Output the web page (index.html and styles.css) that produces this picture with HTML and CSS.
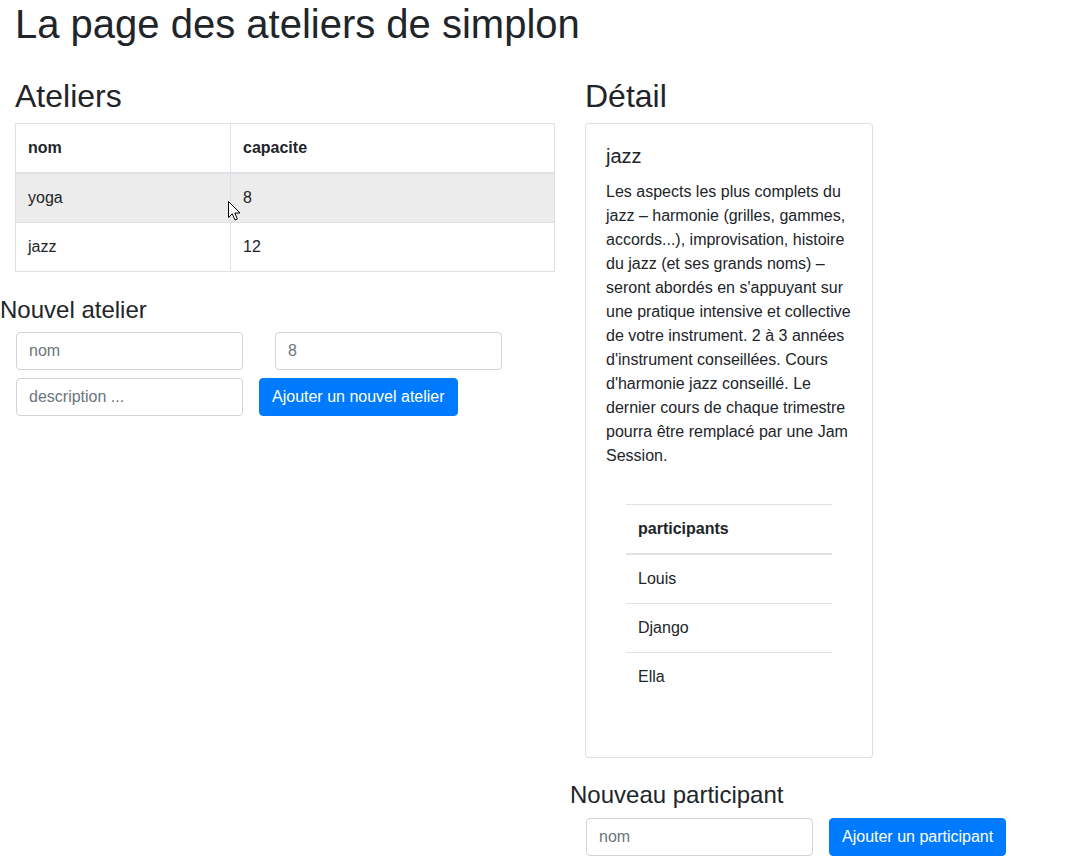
FILE: index.html
```html
<!DOCTYPE html>
<html lang="fr">
<head>
<meta charset="utf-8">
<title>Ateliers simplon</title>
<link rel="stylesheet" href="styles.css">
</head>
<body>
<div class="page">
  <h1 class="title">La page des ateliers de simplon</h1>
  <div class="layout">
    <section class="col col-left">
      <h2 class="section-title">Ateliers</h2>
      <table class="table table-bordered">
        <thead>
          <tr><th class="col-nom">nom</th><th>capacite</th></tr>
        </thead>
        <tbody>
          <tr class="row-hover"><td>yoga</td><td>8</td></tr>
          <tr><td>jazz</td><td>12</td></tr>
        </tbody>
      </table>
      <h4 class="form-title">Nouvel atelier</h4>
      <form class="new-form">
        <div class="form-row">
          <input class="input" type="text" placeholder="nom">
          <input class="input" type="text" placeholder="8">
        </div>
        <div class="form-row">
          <input class="input" type="text" placeholder="description ...">
          <button class="btn" type="button">Ajouter un nouvel atelier</button>
        </div>
      </form>
    </section>
    <section class="col col-right">
      <h2 class="section-title">Détail</h2>
      <div class="card">
        <div class="card-body">
          <h5 class="card-title">jazz</h5>
          <p class="card-text">Les aspects les plus complets du jazz – harmonie (grilles, gammes, accords...), improvisation, histoire du jazz (et ses grands noms) – seront abordés en s'appuyant sur une pratique intensive et collective de votre instrument. 2 à 3 années d'instrument conseillées. Cours d'harmonie jazz conseillé. Le dernier cours de chaque trimestre pourra être remplacé par une Jam Session.</p>
          <div class="participants">
            <table class="table">
              <thead><tr><th>participants</th></tr></thead>
              <tbody>
                <tr><td>Louis</td></tr>
                <tr><td>Django</td></tr>
                <tr><td>Ella</td></tr>
              </tbody>
            </table>
          </div>
        </div>
      </div>
      <h4 class="form-title form-title-participant">Nouveau participant</h4>
      <form class="new-form">
        <div class="form-row">
          <input class="input" type="text" placeholder="nom">
          <button class="btn" type="button">Ajouter un participant</button>
        </div>
      </form>
    </section>
  </div>
  <svg class="cursor" width="14" height="22" viewBox="0 0 14 22" aria-hidden="true">
    <path d="M0.5 0.5 L0.5 16.5 L4.3 12.8 L7 19 L9.4 18 L6.8 12 L12 12 Z" fill="#fff" stroke="#000" stroke-width="1" stroke-linejoin="round"/>
  </svg>
</div>
</body>
</html>
```

FILE: styles.css
```css
* {
  box-sizing: border-box;
}

html,
body {
  margin: 0;
}

body {
  font-family: "Liberation Sans", Arial, sans-serif;
  font-size: 16px;
  line-height: 1.5;
  color: #212529;
  background: #fff;
}

.page {
  position: relative;
  padding: 0 15px;
}

.title {
  font-size: 40px;
  font-weight: 500;
  line-height: 48px;
  margin: 0 0 8px;
}

.layout {
  display: flex;
  margin: 29px -15px 0;
}

.col {
  flex: none;
  padding: 0 15px;
}

.col-left {
  width: 570px;
}

.col-right {
  width: 318px;
}

.section-title {
  font-size: 32px;
  font-weight: 500;
  line-height: 38px;
  margin: 0 0 8px;
}

.table {
  width: 100%;
  border-collapse: collapse;
  margin-bottom: 16px;
}

.table th,
.table td {
  padding: 12px;
  text-align: left;
  vertical-align: top;
  border-top: 1px solid #dee2e6;
}

.table thead th {
  vertical-align: bottom;
  border-bottom: 2px solid #dee2e6;
  font-weight: bold;
}

.table-bordered {
  border: 1px solid #dee2e6;
}

.table-bordered th,
.table-bordered td {
  border: 1px solid #dee2e6;
}

.table-bordered thead th {
  border-bottom-width: 2px;
}

.col-nom {
  width: 215px;
}

.row-hover {
  background: #ececec;
}

.form-title {
  font-size: 24px;
  font-weight: 500;
  line-height: 28.8px;
  margin: 24px 0 7px -15px;
}

.form-title-participant {
  margin-top: 23px;
  margin-bottom: 8px;
}

.new-form {
  margin-left: -15px;
  display: flex;
  flex-direction: column;
  gap: 8px;
}

.form-row {
  display: flex;
}

.input {
  flex: none;
  width: 227px;
  height: 38px;
  margin: 0 16px;
  padding: 6px 12px;
  font-family: inherit;
  font-size: 16px;
  line-height: 24px;
  color: #495057;
  background: #fff;
  border: 1px solid #ced4da;
  border-radius: 4px;
}

.input::placeholder {
  color: #6c757d;
  opacity: 1;
}

.btn {
  flex: none;
  height: 38px;
  padding: 6px 12px;
  font-family: inherit;
  font-size: 16px;
  line-height: 24px;
  color: #fff;
  background: #007bff;
  border: 1px solid #007bff;
  border-radius: 4px;
  white-space: nowrap;
}

.card {
  border: 1px solid rgba(0, 0, 0, 0.125);
  border-radius: 4px;
  background: #fff;
}

.card-body {
  padding: 20px;
}

.card-title {
  font-size: 20px;
  font-weight: 500;
  line-height: 24px;
  margin: 0 0 12px;
}

.card-text {
  margin: 0 0 16px;
}

.participants {
  padding: 20px;
}

.cursor {
  position: absolute;
  left: 228px;
  top: 201px;
}
```
